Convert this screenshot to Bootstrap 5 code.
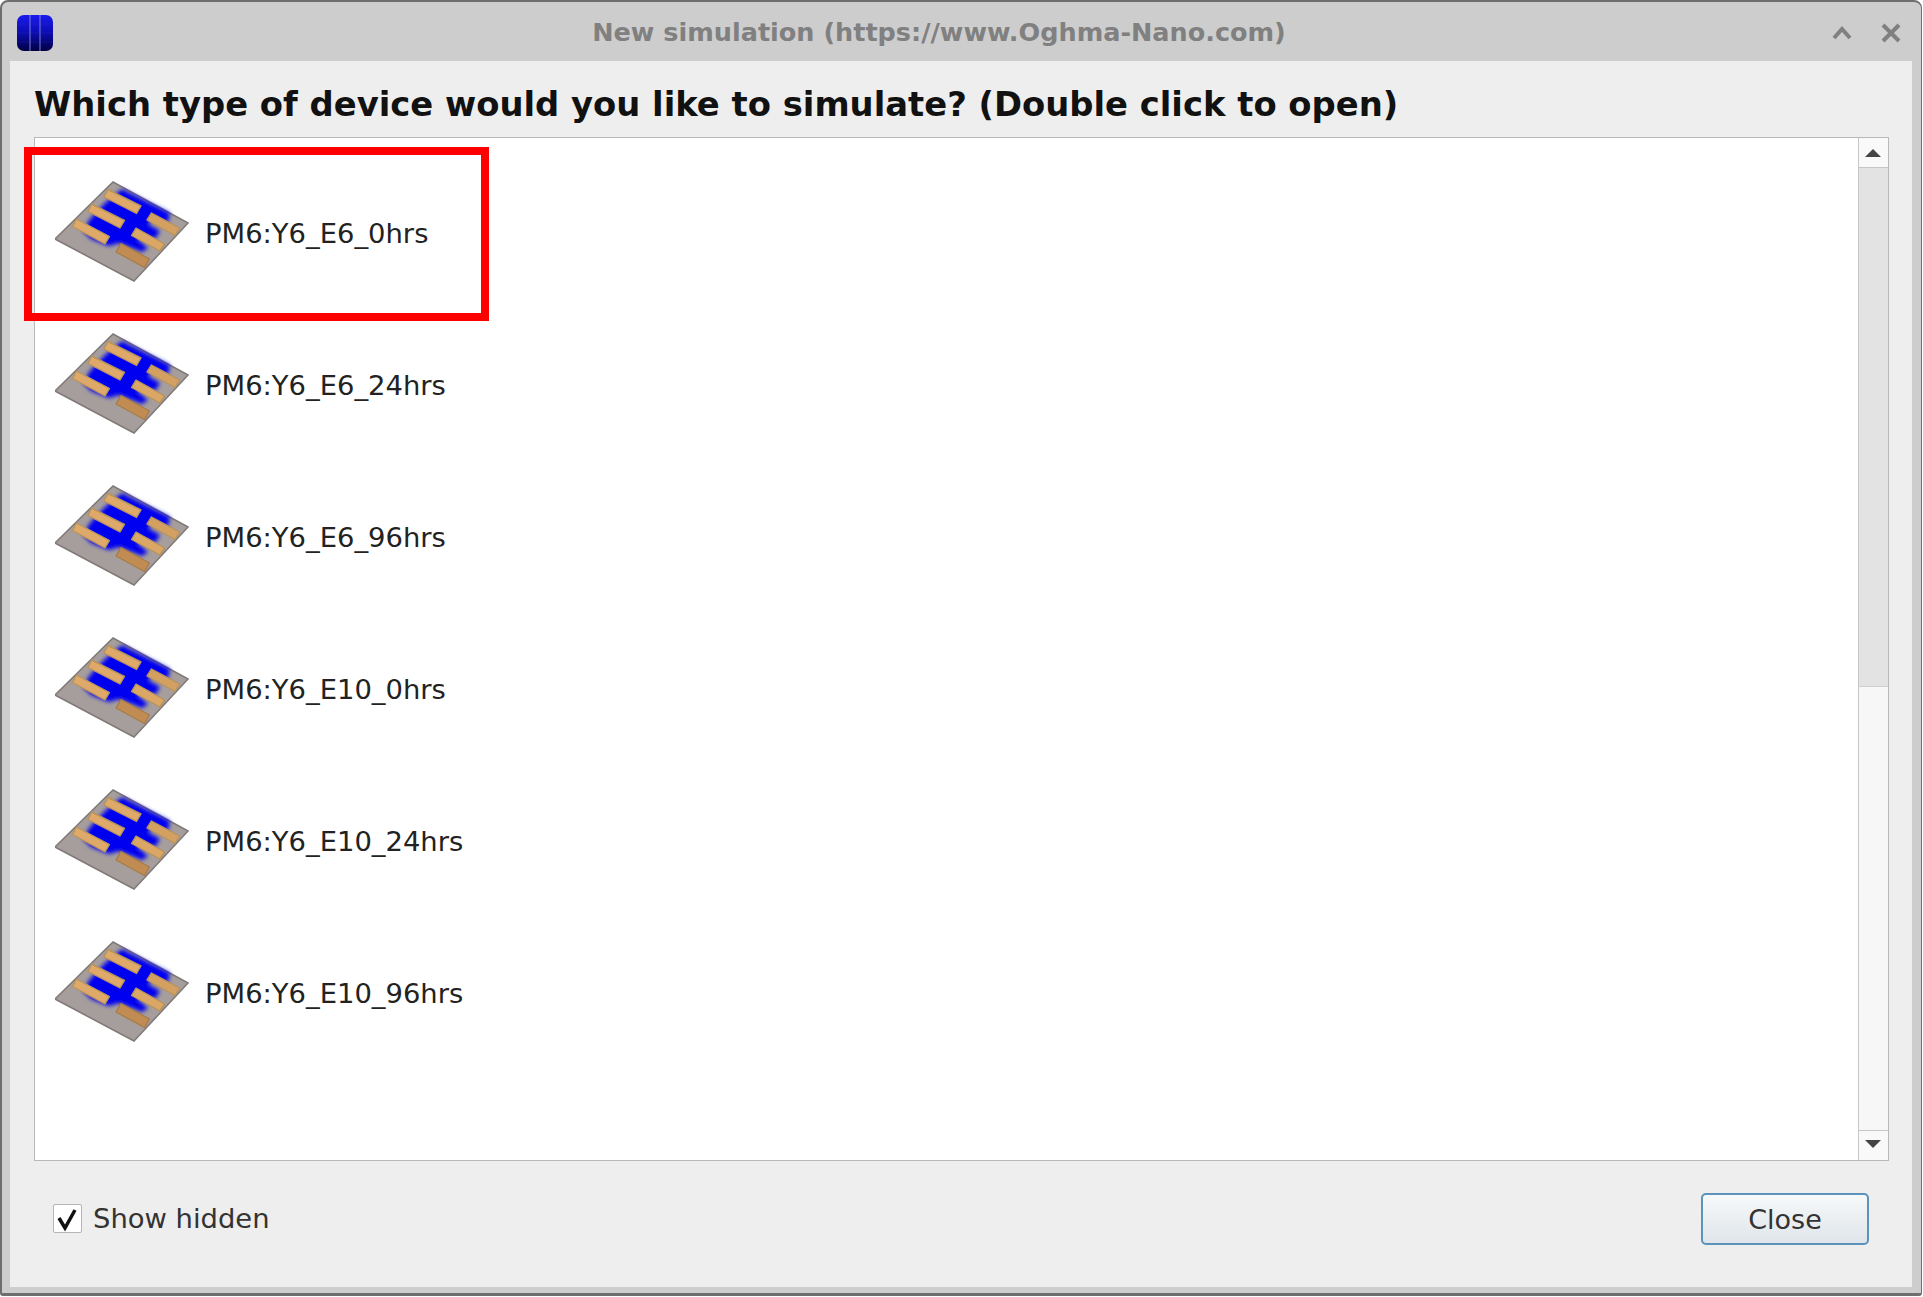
<!DOCTYPE html>
<html lang="en">
  <head>
    <meta charset="UTF-8" />
    <meta name="viewport" content="width=device-width, initial-scale=1" />
    <title>New simulation</title>
    <link
      href="https://cdn.jsdelivr.net/npm/bootstrap@5.3.2/dist/css/bootstrap.min.css"
      rel="stylesheet"
    />
    <style>
      html,
      body {
        width: 1923px;
        height: 1297px;
        margin: 0;
        overflow: hidden;
        background: #fff;
        font-family: "DejaVu Sans", sans-serif;
      }

      .app-window {
        position: relative;
        width: 1922px;
        height: 1296px;
        background: #cdcdcd;
        border: 2px solid #6e6e6e;
        border-right-width: 1px;
        border-bottom-width: 3px;
        border-radius: 8px 8px 3px 3px;
      }

      .title-bar {
        height: 59px;
        padding: 2px 20px 0 15px;
        flex-shrink: 0;
      }

      .title-text {
        margin-right: 7px;
        color: #808080;
        font-size: 25.5px;
        font-weight: 700;
        text-align: center;
      }

      .win-logo {
        width: 36px;
        height: 36px;
        display: block;
      }

      .win-btn {
        display: block;
      }

      .win-btns {
        gap: 29px;
      }

      .dialog-body {
        margin: 0 9px 6px 8px;
        background: #eeeeee;
      }

      .dialog-heading {
        height: 76px;
        padding: 12px 0 0 24px;
        margin: 0;
        color: #111;
        font-size: 33.8px;
        font-weight: 700;
        line-height: 1;
        flex-shrink: 0;
      }

      .device-box {
        height: 1024px;
        margin: 0 23px 0 24px;
        background: #fff;
        border: 1px solid #b9b9b9;
      }

      .device-list {
        padding-top: 17px;
      }

      .device-row {
        height: 152px;
        padding: 0 0 0 20px;
        gap: 16px;
        border: 0;
        color: #222;
        font-size: 27.4px;
        background: transparent;
      }

      .device-row span {
        padding-top: 5px;
      }

      .device-pic {
        width: 134px;
        height: 101px;
        flex-shrink: 0;
      }

      .scroll-col {
        width: 30px;
        border-left: 1px solid #c6c6c6;
        background: #f7f7f7;
      }

      .scroll-btn {
        height: 30px;
        padding-right: 2px;
        background: #f9f9f9;
        flex-shrink: 0;
      }

      .scroll-btn-up {
        border-bottom: 1px solid #c6c6c6;
      }

      .scroll-btn-down {
        padding-bottom: 3px;
        border-top: 1px solid #c6c6c6;
      }

      .scroll-thumb {
        height: 519px;
        background: #e3e3e3;
        border-bottom: 1px solid #cfcfcf;
      }

      .dialog-foot {
        height: 126px;
        padding: 0 43px 10px 43px;
      }

      .show-hidden {
        gap: 11px;
        color: #333;
        font-size: 27.4px;
      }

      .check-box {
        width: 29px;
        height: 29px;
        background: #fff;
        border: 1px solid #b5b5b5;
        border-radius: 2px;
      }

      .close-btn {
        width: 168px;
        height: 52px;
        padding: 0;
        color: #333;
        font-size: 27px;
        line-height: 1;
        background: linear-gradient(#f7f9fa, #dfe5ea);
        border: 2px solid #5c93ba;
        border-radius: 5px;
      }

      .red-frame {
        position: absolute;
        left: 22px;
        top: 145px;
        width: 465px;
        height: 174px;
        border: 8px solid #ff0000;
      }
    </style>
  </head>
  <body>
    <svg width="0" height="0" class="d-block">
      <defs>
        <filter id="soft" x="-20%" y="-20%" width="140%" height="140%">
          <feGaussianBlur stdDeviation="2" />
        </filter>
        <filter id="softer" x="-5%" y="-5%" width="110%" height="110%">
          <feGaussianBlur stdDeviation="0.5" />
        </filter>
        <linearGradient id="logoFill" x1="0" y1="0" x2="0" y2="1">
          <stop offset="0" stop-color="#1a1af0" />
          <stop offset="0.5" stop-color="#0c0cb0" />
          <stop offset="1" stop-color="#000040" />
        </linearGradient>
        <symbol id="deviceIcon" viewBox="0 0 134 101">
          <g filter="url(#softer)">
            <polygon points="58,1 133,42 79,100 0,58" fill="#a69e9c" stroke="#807a78" stroke-width="1.6" />
            <polygon
              filter="url(#soft)"
              fill="#0000f0"
              points="67,8 115,32 113,42 98,37 93,43 105,50 100,58 87,54 82,58 93,67 87,71 64,62 54,65 36,58 28,50 35,38 49,23 62,12"
            />
            <g fill="#dfa96a" stroke="#b8935f" stroke-width="1.4" stroke-linejoin="round">
              <polygon points="53,8.5 86,25 81.5,32.5 49,16" />
              <polygon points="36.5,23 69.5,39.5 65,47 33,30.5" />
              <polygon points="21.5,38 54.5,55.5 50,63 17.5,45.5" />
              <polygon points="96.5,32 124.5,47 120,54.5 92,39" fill="#d3a062" />
              <polygon points="81,47 109.5,63 105,70 76.5,54.5" fill="#dba766" />
              <polygon points="66,62.5 94.5,78 89.5,86.5 61,71" fill="#c18c52" stroke="#a87c4a" />
            </g>
          </g>
        </symbol>
      </defs>
    </svg>

    <div class="app-window d-flex flex-column">
      <div class="title-bar d-flex align-items-center justify-content-between">
        <svg class="win-logo" viewBox="0 0 36 36">
          <rect width="36" height="36" rx="7" fill="url(#logoFill)" />
          <path d="M13 0V36M23 0V36" stroke="#7f7fd8" stroke-width="1" />
          <path d="M0 9H36M0 18H36M0 27H36" stroke="#3a3ab0" stroke-width="0.5" opacity="0.5" />
        </svg>
        <div class="title-text flex-grow-1">New simulation (https://www.Oghma-Nano.com)</div>
        <div class="win-btns d-flex align-items-center">
          <svg class="win-btn" width="20" height="14" viewBox="0 0 20 14">
            <path d="M2 12L10 3L18 12" fill="none" stroke="#808080" stroke-width="4" />
          </svg>
          <svg class="win-btn" width="20" height="20" viewBox="0 0 20 20">
            <path d="M2 2L18 18M18 2L2 18" fill="none" stroke="#808080" stroke-width="4" />
          </svg>
        </div>
      </div>

      <div class="dialog-body d-flex flex-column flex-grow-1">
        <h1 class="dialog-heading d-flex align-items-center">
          Which type of device would you like to simulate? (Double click to open)
        </h1>

        <div class="device-box d-flex">
          <div class="device-list list-group list-group-flush flex-grow-1" id="deviceList"></div>
          <div class="scroll-col d-flex flex-column">
            <div class="scroll-btn scroll-btn-up d-flex align-items-center justify-content-center">
              <svg width="16" height="8" viewBox="0 0 16 8"><path d="M8 0L16 8H0Z" fill="#444" /></svg>
            </div>
            <div class="scroll-thumb"></div>
            <div class="flex-grow-1"></div>
            <div class="scroll-btn scroll-btn-down d-flex align-items-center justify-content-center">
              <svg width="16" height="8" viewBox="0 0 16 8"><path d="M0 0H16L8 8Z" fill="#444" /></svg>
            </div>
          </div>
        </div>

        <div class="dialog-foot d-flex align-items-center justify-content-between">
          <div class="show-hidden d-flex align-items-center">
            <div class="check-box d-flex align-items-center justify-content-center">
              <svg width="27" height="27" viewBox="0 0 27 27">
                <path d="M5 13L11 23L21 5" fill="none" stroke="#111" stroke-width="3.5" />
              </svg>
            </div>
            <span>Show hidden</span>
          </div>
          <button type="button" class="btn close-btn">Close</button>
        </div>
      </div>

      <div class="red-frame"></div>
    </div>

    <script>
      const devices = [
        "PM6:Y6_E6_0hrs",
        "PM6:Y6_E6_24hrs",
        "PM6:Y6_E6_96hrs",
        "PM6:Y6_E10_0hrs",
        "PM6:Y6_E10_24hrs",
        "PM6:Y6_E10_96hrs",
      ]

      const list = document.getElementById("deviceList")
      devices.forEach((name) => {
        const row = document.createElement("div")
        row.className = "list-group-item device-row d-flex align-items-center"
        row.innerHTML =
          '<svg class="device-pic"><use href="#deviceIcon" /></svg><span>' +
          name +
          "</span>"
        list.appendChild(row)
      })
    </script>
  </body>
</html>
